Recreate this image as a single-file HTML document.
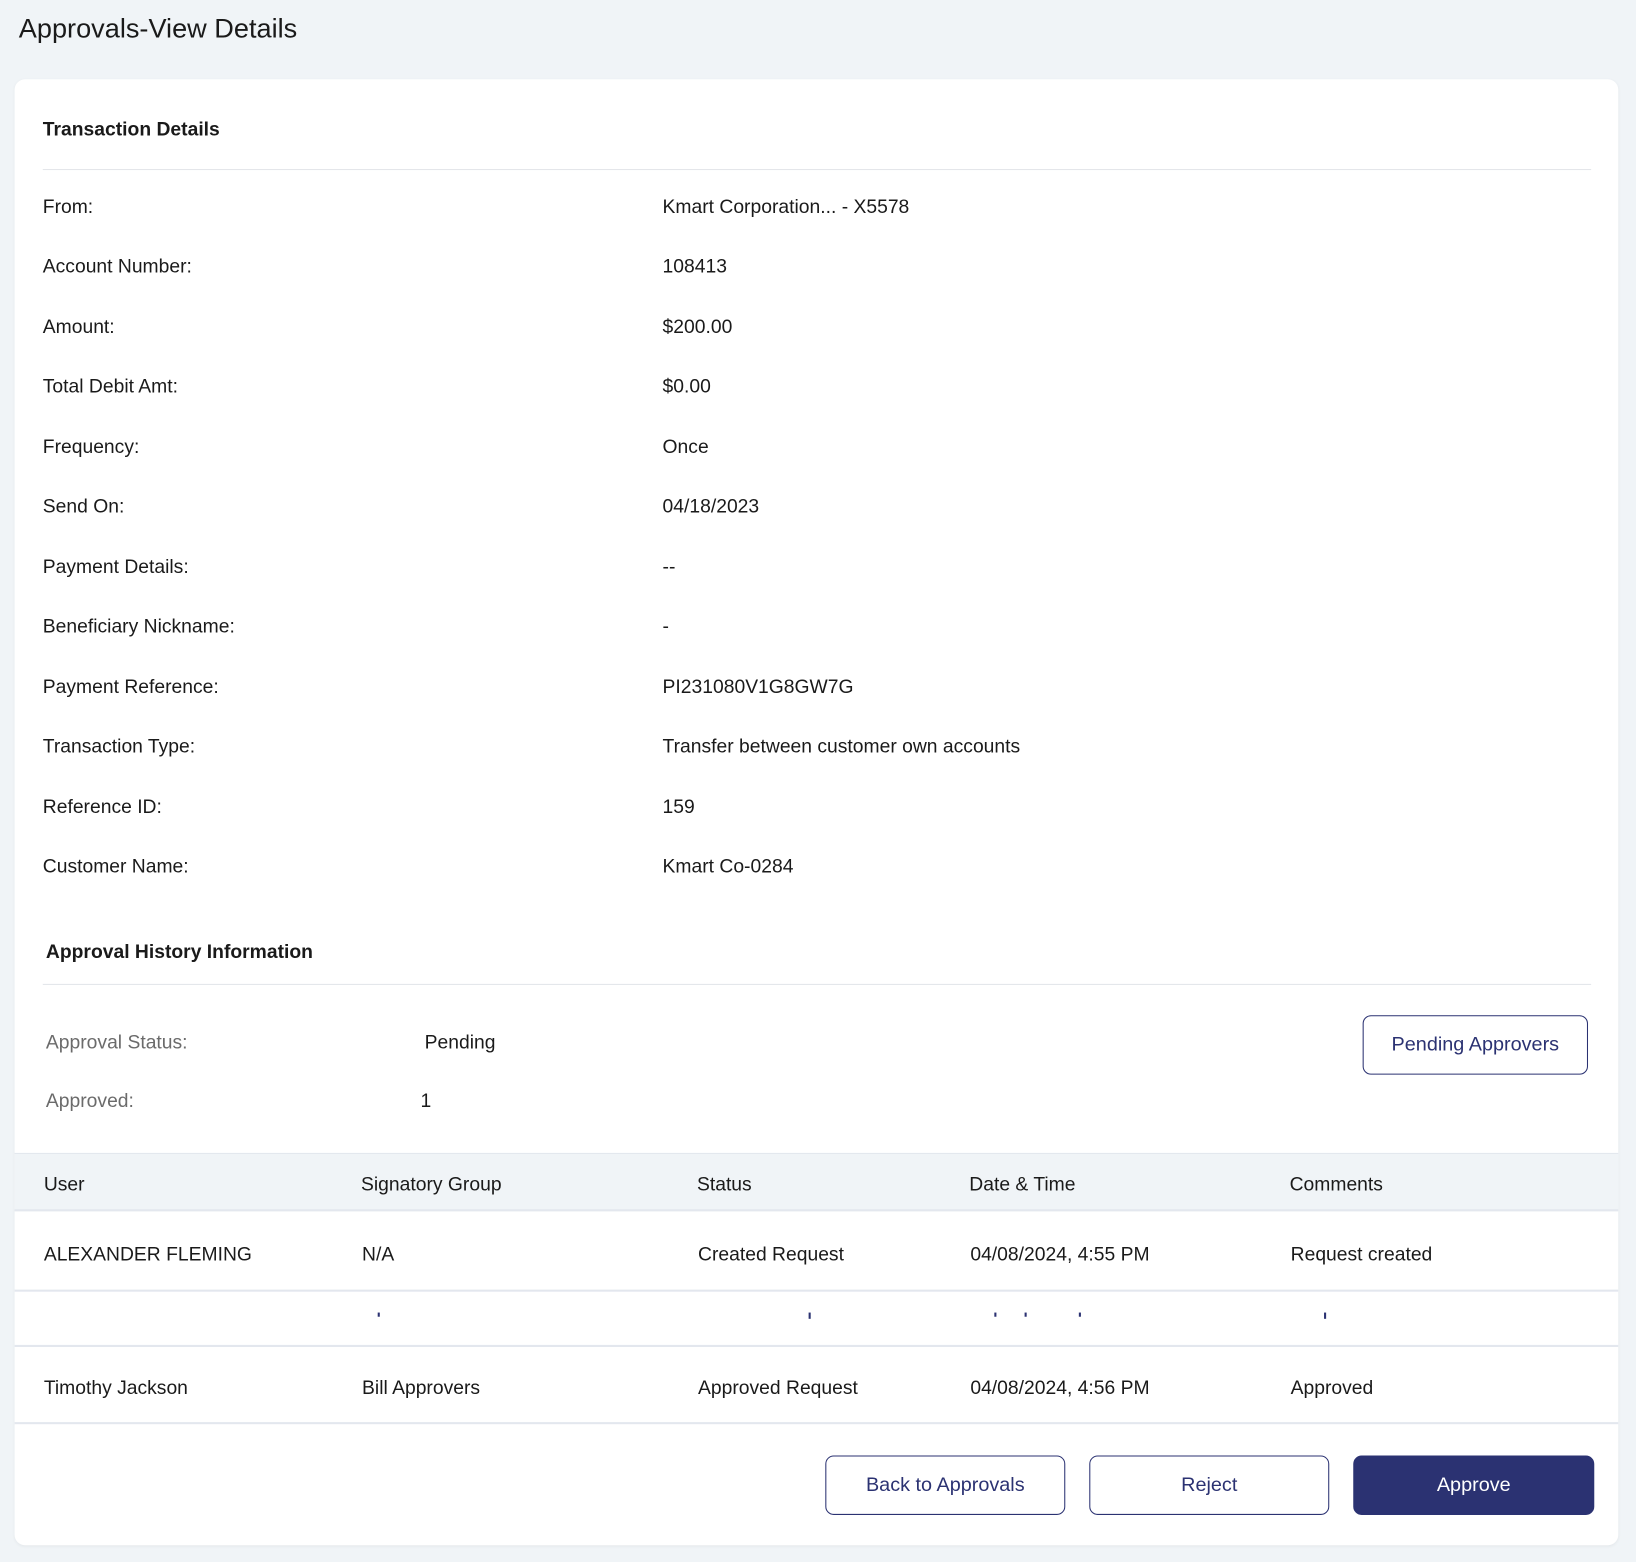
<!DOCTYPE html>
<html><head><meta charset="utf-8"><style>
html,body{margin:0;padding:0;background:#f0f4f7;}
body{width:1636px;height:1562px;overflow:hidden;font-family:"Liberation Sans",sans-serif;color:#1a1a1a;}
#w{position:absolute;left:0;top:0;width:1568px;height:1497px;transform:scale(1.04337);transform-origin:0 0;}
.a{position:absolute;white-space:nowrap;}
.t{font-size:26px;left:18px;top:12px;}
.card{position:absolute;left:14px;top:76px;width:1537px;height:1405px;background:#fff;border-radius:10px;box-shadow:0 1px 3px rgba(0,0,0,.05);}
.h{font-weight:bold;font-size:18.5px;}
.hr{position:absolute;height:1px;background:#e3e6ea;}
.l{font-size:18.5px;margin-top:2px;}
.g{color:#6b6b6b;}
.th{position:absolute;left:14px;width:1537px;}
.btn{position:absolute;box-sizing:border-box;border:1.5px solid #2b3272;border-radius:8px;color:#2b3272;font-size:19px;display:flex;align-items:center;justify-content:center;background:#fff;}
.tk{position:absolute;top:1258px;width:1.5px;height:6px;background:#2b3272;}
</style></head><body><div id="w">
<div class="a t">Approvals-View Details</div>
<div class="card"></div>
<div class="a h" style="left:41px;top:113px">Transaction Details</div>
<div class="hr" style="left:41px;width:1484px;top:162px"></div>

<div class="a l" style="left:41px;top:185px">From:</div><div class="a l" style="left:635px;top:185px">Kmart Corporation... - X5578</div>
<div class="a l" style="left:41px;top:242px">Account Number:</div><div class="a l" style="left:635px;top:242px">108413</div>
<div class="a l" style="left:41px;top:300px">Amount:</div><div class="a l" style="left:635px;top:300px">$200.00</div>
<div class="a l" style="left:41px;top:357px">Total Debit Amt:</div><div class="a l" style="left:635px;top:357px">$0.00</div>
<div class="a l" style="left:41px;top:415px">Frequency:</div><div class="a l" style="left:635px;top:415px">Once</div>
<div class="a l" style="left:41px;top:472px">Send On:</div><div class="a l" style="left:635px;top:472px">04/18/2023</div>
<div class="a l" style="left:41px;top:530px">Payment Details:</div><div class="a l" style="left:635px;top:530px">--</div>
<div class="a l" style="left:41px;top:587px">Beneficiary Nickname:</div><div class="a l" style="left:635px;top:587px">-</div>
<div class="a l" style="left:41px;top:645px">Payment Reference:</div><div class="a l" style="left:635px;top:645px">PI231080V1G8GW7G</div>
<div class="a l" style="left:41px;top:702px">Transaction Type:</div><div class="a l" style="left:635px;top:702px">Transfer between customer own accounts</div>
<div class="a l" style="left:41px;top:760px">Reference ID:</div><div class="a l" style="left:635px;top:760px">159</div>
<div class="a l" style="left:41px;top:817px">Customer Name:</div><div class="a l" style="left:635px;top:817px">Kmart Co-0284</div>

<div class="a h" style="left:44px;top:901px">Approval History Information</div>
<div class="hr" style="left:41px;width:1484px;top:943px"></div>
<div class="a l g" style="left:44px;top:986px">Approval Status:</div><div class="a l" style="left:407px;top:986px">Pending</div>
<div class="a l g" style="left:44px;top:1042px">Approved:</div><div class="a l" style="left:403px;top:1042px">1</div>
<div class="btn" style="left:1306px;top:973px;width:216px;height:57px">Pending Approvers</div>

<div class="th" style="top:1105px;height:56px;background:#f0f4f7;border-top:1px solid #e3e7ee;border-bottom:2px solid #e3e7ee;box-sizing:border-box"></div>
<div class="a l" style="left:42px;top:1122px">User</div>
<div class="a l" style="left:346px;top:1122px">Signatory Group</div>
<div class="a l" style="left:668px;top:1122px">Status</div>
<div class="a l" style="left:929px;top:1122px">Date &amp; Time</div>
<div class="a l" style="left:1236px;top:1122px">Comments</div>

<div class="a l" style="left:42px;top:1189px">ALEXANDER FLEMING</div>
<div class="a l" style="left:347px;top:1189px">N/A</div>
<div class="a l" style="left:669px;top:1189px">Created Request</div>
<div class="a l" style="left:930px;top:1189px">04/08/2024, 4:55 PM</div>
<div class="a l" style="left:1237px;top:1189px">Request created</div>
<div class="th" style="top:1236px;height:2px;background:#e3e7ee"></div>
<div class="tk" style="left:362px;height:4px"></div><div class="tk" style="left:775px"></div><div class="tk" style="left:953px;height:4px"></div><div class="tk" style="left:982px;height:4px"></div><div class="tk" style="left:1034px;height:4px"></div><div class="tk" style="left:1269px"></div>
<div class="th" style="top:1289px;height:2px;background:#e3e7ee"></div>
<div class="a l" style="left:42px;top:1317px">Timothy Jackson</div>
<div class="a l" style="left:347px;top:1317px">Bill Approvers</div>
<div class="a l" style="left:669px;top:1317px">Approved Request</div>
<div class="a l" style="left:930px;top:1317px">04/08/2024, 4:56 PM</div>
<div class="a l" style="left:1237px;top:1317px">Approved</div>
<div class="th" style="top:1363px;height:2px;background:#e3e7ee"></div>

<div class="btn" style="left:791px;top:1395px;width:230px;height:57px">Back to Approvals</div>
<div class="btn" style="left:1044px;top:1395px;width:230px;height:57px">Reject</div>
<div class="btn" style="left:1297px;top:1395px;width:231px;height:57px;background:#2b3272;color:#fff">Approve</div>
</div></body></html>
